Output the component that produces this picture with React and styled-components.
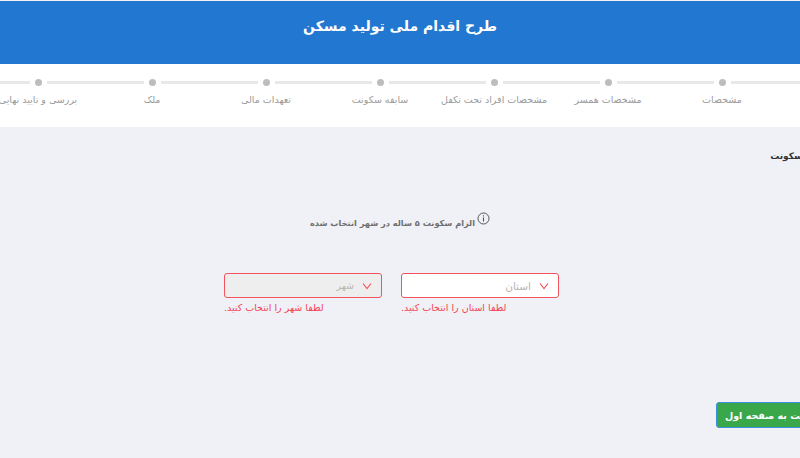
import React from "react";
import styled, { createGlobalStyle } from "styled-components";

const GlobalStyle = createGlobalStyle`
  html, body {
    margin: 0;
    padding: 0;
    height: 100%;
    overflow: hidden;
    background: #eff1f6;
    font-family: "DejaVu Sans", "Noto Sans", sans-serif;
  }
`;

const Page = styled.div`
  direction: rtl;
  width: 800px;
  height: 458px;
  overflow: hidden;
  display: flex;
  flex-direction: column;
`;

const Header = styled.header`
  height: 63px;
  margin-top: 1px;
  background: #2277d1;
  color: #fff;
  display: flex;
  align-items: center;
  justify-content: center;
  font-size: 14px;
  font-weight: 700;
  padding-bottom: 14px;
  box-sizing: border-box;
`;

const Stepper = styled.nav`
  height: 63px;
  background: #fff;
  display: flex;
  padding-top: 15px;
  box-sizing: border-box;
  overflow: hidden;
`;

const Lead = styled.span`
  flex: 0 0 21px;
  height: 3px;
  margin-top: 2px;
  background: #e8e8e8;
`;

const Step = styled.div`
  flex: 0 0 114px;
  display: flex;
  flex-direction: column;
  align-items: center;
`;

const StepHead = styled.div`
  width: 100%;
  height: 7px;
  display: flex;
  align-items: center;
  gap: 5px;
`;

const Line = styled.span`
  flex: 1;
  height: 3px;
  background: #e8e8e8;
`;

const Dot = styled.span`
  flex: 0 0 7px;
  height: 7px;
  border-radius: 50%;
  background: #bdbdbd;
`;

const StepLabel = styled.span`
  margin-top: 8px;
  font-size: 9.5px;
  color: #9b9b9b;
  white-space: nowrap;
`;

const Main = styled.main`
  flex: 1;
  display: flex;
  flex-direction: column;
  background: #eff1f6;
`;

const SectionTitle = styled.h2`
  margin: 22px -26px 0 0;
  font-size: 9px;
  line-height: 14px;
  font-weight: 700;
  color: #333;
`;

const Notice = styled.div`
  margin: 49px 0 0 0;
  padding-right: 310px;
  display: flex;
  align-items: flex-start;
  gap: 2px;
`;

const NoticeText = styled.span`
  margin-top: 4px;
  font-size: 8.2px;
  line-height: 14px;
  font-weight: 700;
  color: #6f6f6f;
  white-space: nowrap;
`;

const InfoIcon = styled.svg`
  width: 13px;
  height: 13px;
  flex: none;
`;

const Fields = styled.div`
  margin-top: 43px;
  padding-right: 241px;
  display: flex;
  gap: 19px;
`;

const Field = styled.div`
  width: 158px;
`;

const SelectBox = styled.div`
  height: 25px;
  box-sizing: border-box;
  border: 1px solid #f4525c;
  border-radius: 3px;
  background: ${({ disabled }) => (disabled ? "#eeeeee" : "#fff")};
  display: flex;
  align-items: center;
  padding-right: 9px;
  gap: 8px;
`;

const Chevron = styled.svg`
  width: 10px;
  height: 10px;
  flex: none;
`;

const Placeholder = styled.span`
  font-size: ${({ $small }) => ($small ? "9.5px" : "10.5px")};
  color: #b5b5b5;
`;

const ErrorText = styled.p`
  margin: 3px 0 0;
  font-size: 9.5px;
  line-height: 14px;
  color: #f73f52;
  white-space: nowrap;
  text-align: left;
`;

const Footer = styled.div`
  margin: 87px -37px 0 0;
  display: flex;
`;

const BackButton = styled.button`
  height: 26px;
  width: 121px;
  padding: 0;
  border: 1px solid #3d8fe0;
  border-radius: 3px;
  background: #3aa84a;
  color: #fff;
  font-family: inherit;
  font-size: 9.5px;
  font-weight: 700;
  white-space: nowrap;
`;

const steps = [
  "مشخصات",
  "مشخصات همسر",
  "مشخصات افراد تحت تکفل",
  "سابقه سکونت",
  "تعهدات مالی",
  "ملک",
  "بررسی و تایید نهایی",
];

function ChevronDown() {
  return (
    <Chevron viewBox="0 0 10 10" fill="none" stroke="#f4525c" strokeWidth="1.2">
      <path d="M1 2.5 L5 7.5 L9 2.5" />
    </Chevron>
  );
}

export default function App() {
  return (
    <Page>
      <GlobalStyle />
      <Header>طرح اقدام ملی تولید مسکن</Header>
      <Stepper>
        <Lead />
        {steps.map((label) => (
          <Step key={label}>
            <StepHead>
              <Line />
              <Dot />
              <Line />
            </StepHead>
            <StepLabel>{label}</StepLabel>
          </Step>
        ))}
      </Stepper>
      <Main>
        <SectionTitle>محل سکونت</SectionTitle>
        <Notice>
          <InfoIcon viewBox="0 0 13 13" fill="none" stroke="#555">
            <circle cx="6.5" cy="6.5" r="5.5" strokeWidth="1" />
            <path d="M6.5 5.6 V9.6 M6.5 3.3 V4.4" strokeWidth="1.1" />
          </InfoIcon>
          <NoticeText>الزام سکونت ۵ ساله در شهر انتخاب شده</NoticeText>
        </Notice>
        <Fields>
          <Field>
            <SelectBox>
              <ChevronDown />
              <Placeholder>استان</Placeholder>
            </SelectBox>
            <ErrorText>لطفا استان را انتخاب کنید.</ErrorText>
          </Field>
          <Field>
            <SelectBox disabled>
              <ChevronDown />
              <Placeholder $small>شهر</Placeholder>
            </SelectBox>
            <ErrorText>لطفا شهر را انتخاب کنید.</ErrorText>
          </Field>
        </Fields>
        <Footer>
          <BackButton>بازگشت به صفحه اول</BackButton>
        </Footer>
      </Main>
    </Page>
  );
}
